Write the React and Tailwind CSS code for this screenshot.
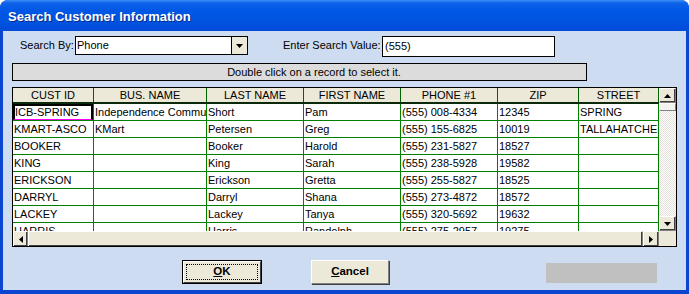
import React from "react";

const cols = [
  { h: "CUST ID", w: "w-[81px]" },
  { h: "BUS. NAME", w: "w-[113px]" },
  { h: "LAST NAME", w: "w-[97px]" },
  { h: "FIRST NAME", w: "w-[97px]" },
  { h: "PHONE #1", w: "w-[97px]" },
  { h: "ZIP", w: "w-[81px]" },
  { h: "STREET", w: "w-[80px]" },
];

const rows = [
  ["ICB-SPRING", "Independence Community", "Short", "Pam", "(555) 008-4334", "12345", "SPRING"],
  ["KMART-ASCO", "KMart", "Petersen", "Greg", "(555) 155-6825", "10019", "TALLAHATCHEE"],
  ["BOOKER", "", "Booker", "Harold", "(555) 231-5827", "18527", ""],
  ["KING", "", "King", "Sarah", "(555) 238-5928", "19582", ""],
  ["ERICKSON", "", "Erickson", "Gretta", "(555) 255-5827", "18525", ""],
  ["DARRYL", "", "Darryl", "Shana", "(555) 273-4872", "18572", ""],
  ["LACKEY", "", "Lackey", "Tanya", "(555) 320-5692", "19632", ""],
  ["HARRIS", "", "Harris", "Randolph", "(555) 275-2957", "19275", ""],
];

const Tri = ({ dir }) => {
  const pts = {
    down: "0,0 7,0 3.5,4",
    up: "0,4 7,4 3.5,0",
    left: "4,0 4,7 0,3.5",
    right: "0,0 0,7 4,3.5",
  }[dir];
  const vert = dir === "up" || dir === "down";
  return (
    <svg width={vert ? 7 : 4} height={vert ? 4 : 7} viewBox={vert ? "0 0 7 4" : "0 0 4 7"}>
      <polygon points={pts} fill="#000" />
    </svg>
  );
};

const Btn3D = ({ children, className = "" }) => (
  <div
    className={
      "flex items-center justify-center bg-[#ece9d8] border border-t-white border-l-white border-r-[#808080] border-b-[#808080] " +
      className
    }
  >
    {children}
  </div>
);

export default function App() {
  return (
    <div
      className="w-[689px] h-[294px] bg-white overflow-hidden text-black"
      style={{ fontFamily: '"Liberation Sans", Arial, sans-serif' }}
    >
      <div className="w-full h-full flex flex-col rounded-t-[8px] bg-[#0a46d0] overflow-hidden">
        {/* Title bar */}
        <div className="h-[31px] shrink-0 flex items-center pl-[8px] bg-[linear-gradient(180deg,#3d8ef5_0px,#0f62e8_3px,#0058e6_10px,#0053e0_22px,#004ad8_31px)]">
          <span className="text-white font-bold text-[13px] whitespace-nowrap [text-shadow:1px_1px_0_#0a2a8a] mt-[2px]">
            Search Customer Information
          </span>
        </div>
        {/* Client */}
        <div className="flex-1 mx-[3px] mb-[4px] bg-[#cddcf0] flex flex-col text-[11px]">
          {/* Search row */}
          <div className="flex items-start pt-[5px] pl-[17px] h-[26px] shrink-0">
            <div className="w-[55px] h-[19px] flex items-center text-[11px] whitespace-nowrap">Search By:</div>
            <div className="flex h-[19px] w-[173px] border border-black">
              <div className="flex-1 bg-white flex items-center pl-[1px] text-[11px]">Phone</div>
              <div className="w-[16px] bg-[#ece9d8] border-l border-black flex items-center justify-center">
                <Tri dir="down" />
              </div>
            </div>
            <div className="ml-[35px] w-[99px] h-[19px] flex items-center text-[11px] whitespace-nowrap">
              Enter Search Value:
            </div>
            <div className="w-[173px] h-[21px] border border-black bg-white flex items-center pl-[2px] text-[11px]">
              (555)
            </div>
          </div>
          {/* Info bar */}
          <div className="ml-[9px] mt-[6px] w-[575px] h-[18px] shrink-0 border border-black bg-[#dcdcdc] flex items-center justify-center pl-[29px] text-[11px] whitespace-nowrap">
            Double click on a record to select it.
          </div>
          {/* Grid */}
          <div className="ml-[9px] mt-[6px] w-[665px] h-[160px] shrink-0 border border-black bg-white flex flex-col overflow-hidden">
            <div className="flex h-[143px] shrink-0">
              <div className="w-[646px] flex flex-col overflow-hidden">
                <div className="flex h-[16px] shrink-0 bg-[#ece9d8] border-b-2 border-[#0b2a0b]">
                  {cols.map((c, i) => (
                    <div
                      key={i}
                      className={c.w + " shrink-0 border-r border-[#006400] flex items-center justify-center text-[11px] leading-none whitespace-nowrap"}
                    >
                      {c.h}
                    </div>
                  ))}
                </div>
                <div className="flex flex-col overflow-hidden">
                  {rows.map((r, ri) => (
                    <div key={ri} className="flex h-[17px] shrink-0 border-b border-[#008000]">
                      {r.map((v, ci) => (
                        <div
                          key={ci}
                          className={
                            cols[ci].w +
                            " shrink-0 border-r border-[#008000] relative overflow-hidden whitespace-nowrap flex items-center text-[11px] leading-none " +
                            (ri === 0 && ci === 0 ? "pl-[2px]" : "pl-[1px]")
                          }
                        >
                          {v}
                          {ri === 0 && ci === 0 && (
                            <div className="absolute inset-0 border-black border-t-2 border-l-2 border-r-2 border-b border-b-[#ff00ff]" />
                          )}
                        </div>
                      ))}
                    </div>
                  ))}
                </div>
              </div>
              {/* vertical scrollbar */}
              <div className="w-[17px] flex flex-col bg-[repeating-conic-gradient(#e4e1d8_0_25%,#ffffff_0_50%)] bg-[length:2px_2px]">
                <Btn3D className="h-[15px] w-[17px] shrink-0 shadow-[inset_-1px_-1px_0_#404040]">
                  <Tri dir="up" />
                </Btn3D>
                <div className="h-[8px] w-[17px] shrink-0 bg-[#f4f3ee] border border-t-white border-l-white border-r-[#808080] border-b-[#808080]" />
                <div className="flex-1" />
                <Btn3D className="h-[15px] w-[17px] shrink-0 shadow-[inset_-1px_-1px_0_#404040]">
                  <Tri dir="down" />
                </Btn3D>
              </div>
            </div>
            {/* horizontal scrollbar */}
            <div className="flex h-[16px] shrink-0">
              <Btn3D className="w-[15px] h-[16px] shrink-0 shadow-[inset_-1px_-1px_0_#404040]">
                <Tri dir="left" />
              </Btn3D>
              <div className="w-[615px] h-[16px] shrink-0 bg-[#ece9d8] border border-t-white border-l-white border-r-[#808080] border-b-[#808080] shadow-[inset_-1px_-1px_0_#404040]" />
              <Btn3D className="w-[16px] h-[16px] shrink-0 shadow-[inset_-1px_-1px_0_#404040]">
                <Tri dir="right" />
              </Btn3D>
              <div className="w-[17px] h-[16px] bg-[#ece9d8]" />
            </div>
          </div>
          {/* Buttons */}
          <div className="flex items-start mt-[13px]">
            <div className="ml-[179px] w-[80px] h-[24px] border border-black">
              <div className="w-full h-full bg-[#ece9d8] border border-t-white border-l-white border-r-[#404040] border-b-[#404040] p-[2px]">
                <div className="w-full h-full border border-dotted border-black flex items-center justify-center font-bold text-[11.5px]">
                  <span>
                    <span className="underline">O</span>K
                  </span>
                </div>
              </div>
            </div>
            <div className="ml-[49px] w-[78px] h-[24px] bg-[#ece9d8] border border-t-white border-l-white border-r-[#808080] border-b-[#808080] shadow-[1px_1px_0_#404040] flex items-center justify-center font-bold text-[11.5px]">
              <span>
                <span className="underline">C</span>ancel
              </span>
            </div>
            <div className="ml-[157px] mt-[3px] w-[111px] h-[20px] bg-[#c0c0c0]" />
          </div>
        </div>
      </div>
    </div>
  );
}
